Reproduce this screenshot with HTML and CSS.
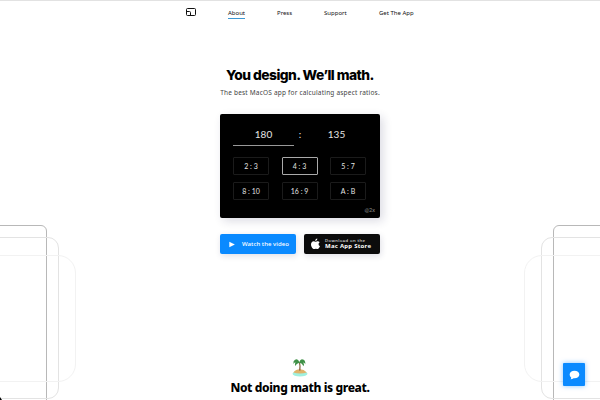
FILE: index.html
```html
<!DOCTYPE html>
<html lang="en">
<head>
<meta charset="utf-8">
<title>Aspect ratio calculator</title>
<link rel="stylesheet" href="styles.css">
</head>
<body>
<div class="frames frames-left"><i class="frame near"></i><i class="frame mid"></i><i class="frame far"></i></div>
<div class="frames frames-right"><i class="frame near"></i><i class="frame mid"></i><i class="frame far"></i></div>
<i class="corner"></i>
<header class="nav">
  <svg class="logo" viewBox="0 0 10 8"><path d="M1.500.5h7q1 0 1 1v5q0 1-1 1h-7q-1 0-1-1v-5q0-1 1-1zM.5 3.500h3q1 0 1 1v3" fill="none" stroke="#111" stroke-width="1"/></svg>
  <a class="active about">About</a>
  <a class="press">Press</a>
  <a class="support">Support</a>
  <a class="get">Get The App</a>
</header>
<main>
  <h1>You design. We’ll math.</h1>
  <p class="sub">The best MacOS app for calculating aspect ratios.</p>
  <section class="app">
    <div class="values"><span class="value current">180</span><span class="colon">:</span><span class="value">135</span></div>
    <div class="ratios">
      <span>2 : 3</span><span class="selected">4 : 3</span><span>5 : 7</span>
      <span>8 : 10</span><span>16 : 9</span><span>A : B</span>
    </div>
    <div class="scale">@2x</div>
  </section>
  <div class="actions">
    <a class="button video"><svg class="play" viewBox="0 0 6 6"><path d="M.3.2 5.900 3 .3 5.800z" fill="#fff"/></svg><span>Watch the video</span></a>
    <a class="button store">
      <svg class="apple" viewBox="0 0 20 24"><path d="M14 0c.2 2.800-2 5.300-4.500 5.300C9.200 2.800 11.500.3 14 0zM10.300 7c1.200 0 2.600-1.300 4.700-1.300 1.700 0 3.300.9 4.200 2.300-3.700 2.300-3 7.300.8 8.700-.9 2.700-3.200 6.600-5.400 6.600-1.500 0-2.200-.9-4-.9s-2.600.9-4 .9C3.500 23.300 0 17.700 0 13.200c0-4.500 2.700-7.300 5.700-7.300C7.700 5.900 9.200 7 10.300 7z" fill="#fff"/></svg>
      <span class="label"><small>Download on the</small><b>Mac App Store</b></span>
    </a>
  </div>
  <svg class="island" viewBox="0 0 18 20">
    <ellipse cx="9" cy="15.800" rx="7.500" ry="2.800" fill="#a0f0df"/>
    <path d="M2.300 14.500Q5 11.200 9 11.300t6.800 3.200q-6.800 2.200-13.500 0z" fill="#dfb36b"/>
    <path d="M8 12.500Q9 8 7.800 4.500l1.200-.2Q10 8 9.500 12.500z" fill="#8a6745"/>
    <path d="M8.300 4Q7 .3 4 1.800q-2 1-1.600 4.200Q3.300 4.500 4.500 4.600 3.500 6 4.300 8 5.300 5.500 8.300 4.800q3 .5 4.200 3.400 1.200-2-.3-3.700 1.500.2 2.100 1.700Q14.500 2 12 1.500 9.800.1 8.300 4z" fill="#3f9147"/>
  </svg>
  <h2>Not doing math is great.</h2>
</main>
<a class="chat"><svg viewBox="0 0 12 10"><path d="M6 .3C9 .3 11.300 2 11.300 4.500S9 8.600 6 8.600l-1-.1Q3.500 9.800 1.600 9.700 2.500 8.800 2.400 7.600 .7 6.500.7 4.500C.7 2 3 .3 6 .3z" fill="#fff"/></svg></a>
</body>
</html>
```
FILE: styles.css
```css
* { box-sizing: border-box; }
body {
  margin: 0;
  height: 400px;
  overflow: hidden;
  position: relative;
  background: #fff;
  border-top: 1px solid #e2e2e2;
  font-family: "Noto Sans", sans-serif;
  color: #111;
}
.nav {
  display: flex;
  height: 23px;
  padding-left: 186px;
  font-size: 6px;
  line-height: 10px;
  align-items: flex-start;
  white-space: nowrap;
}
.nav a { margin-top: 7px; height: 11px; }
.logo { width: 10px; height: 8px; margin: 7px 32px 0 0; }
.about { width: 17px; margin-right: 32px; }
.press { width: 16px; margin-right: 31px; }
.support { width: 24px; margin-right: 31px; }
.active { border-bottom: 1px solid #3c97d3; }
main {
  width: 160px;
  margin: 0 auto;
  display: flex;
  flex-direction: column;
  align-items: center;
  white-space: nowrap;
}
h1 { margin: 42px 0 0; font-family: Inter, sans-serif; font-size: 13.800px; line-height: 18px; font-weight: 800; letter-spacing: -.53px; color: #000; }
.sub { margin: 3px 0 0; font-size: 6.500px; line-height: 11px; letter-spacing: .2px; color: #444; }
.app {
  width: 160px;
  height: 104px;
  margin-top: 16px;
  padding: 12px 13px 0;
  border-radius: 2px;
  background: #000;
  color: #e4e4e4;
  font-family: Lato, sans-serif;
  box-shadow: 3px 3px 10px rgba(30,30,80,.16);
}
.values { display: flex; font-size: 10px; line-height: 16px; text-align: center; }
.value { width: 61px; height: 20px; }
.current { border-bottom: 1px solid #999; }
.colon { width: 12px; }
.ratios { display: grid; grid-template-columns: repeat(3, 36px); gap: 7px 12.500px; margin-top: 11px; }
.ratios span {
  height: 18px;
  border: 1px solid #1b1b1b;
  border-radius: 1px;
  font-size: 7px;
  line-height: 16px;
  text-align: center;
}
.ratios .selected { border-color: #aaa; }
.scale { margin: 7px -8px 0 0; font-size: 5.500px; line-height: 7px; text-align: right; color: #888; }
.actions { display: flex; gap: 8px; margin-top: 16px; }
.button {
  width: 76px;
  height: 20px;
  border-radius: 2px;
  display: flex;
  align-items: center;
  color: #fff;
  box-shadow: 1px 2px 6px rgba(30,30,80,.14);
}
.video { background: #0a8aff; padding-left: 9px; font-size: 6px; font-weight: 500; letter-spacing: .05px; }
.play { width: 6px; height: 7px; margin-right: 7px; }
.store { background: #0c0c0c; padding-left: 7px; }
.apple { width: 9px; height: 12px; margin-right: 5px; }
.label { display: flex; flex-direction: column; }
.label small { font-size: 4.200px; line-height: 5px; letter-spacing: .45px; }
.label b { font-size: 6px; line-height: 7px; letter-spacing: .25px; }
.island { width: 18px; height: 20px; margin-top: 104px; }
h2 { margin: 1px 0 0; font-size: 12px; line-height: 17px; font-weight: 800; letter-spacing: -.38px; color: #000; }
.chat {
  position: absolute;
  left: 563px;
  top: 362px;
  width: 22px;
  height: 23px;
  display: flex;
  align-items: center;
  justify-content: center;
  border-radius: 1px;
  background: #0a8aff;
  box-shadow: 0 0 5px rgba(10,138,255,.5);
}
.chat svg { width: 11px; height: 10px; }
.corner { position: absolute; left: 0; bottom: 0; border-left: 2px solid #000; border-top: 3px solid transparent; }
.frames { position: absolute; top: 0; width: 80px; height: 399px; overflow: hidden; z-index: -1; }
.frames-left { left: 0; }
.frames-right { right: 0; transform: scaleX(-1); }
.frame { position: absolute; left: -40px; border: 1px solid; }
.near { top: 224px; width: 87px; height: 210px; border-radius: 6px; border-color: #b8b8b8; }
.mid { top: 236px; width: 99px; height: 162px; border-radius: 11px; border-color: #e3e3e3; }
.far { top: 254px; width: 116px; height: 127px; border-radius: 18px; border-color: #f2f2f2; }
```
